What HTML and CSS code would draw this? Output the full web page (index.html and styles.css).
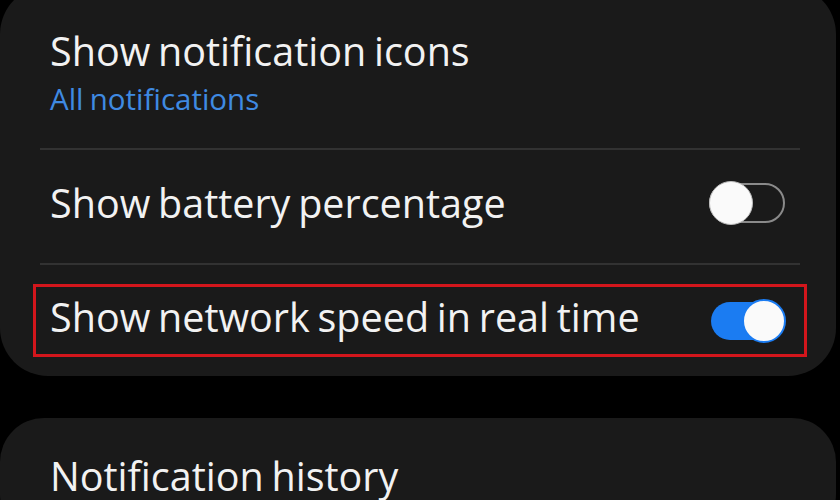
FILE: index.html
```html
<!DOCTYPE html>
<html>
<head>
<meta charset="utf-8">
<link rel="stylesheet" href="styles.css">
</head>
<body>
<div class="screen">
  <section class="card card-top">
    <div class="row row-stack">
      <div class="title">Show notification icons</div>
      <div class="sub">All notifications</div>
    </div>
    <div class="divider"></div>
    <div class="row row-toggle">
      <div class="title">Show battery percentage</div>
      <div class="switch off"><span class="thumb"></span></div>
    </div>
    <div class="divider"></div>
    <div class="row row-last">
      <div class="highlight">
        <div class="title title-up">Show network speed in real time</div>
        <div class="switch on"><span class="thumb"></span></div>
      </div>
    </div>
  </section>
  <section class="card card-bottom">
    <div class="row">
      <div class="title">Notification history</div>
    </div>
  </section>
</div>
</body>
</html>
```
FILE: styles.css
```css
html, body {
  margin: 0;
  padding: 0;
  background: #000;
}
body {
  width: 840px;
  height: 500px;
  overflow: hidden;
  font-family: "Open Sans", "Noto Sans", sans-serif;
}
.screen {
  display: flex;
  flex-direction: column;
}
.card {
  width: 836px;
  box-sizing: border-box;
  background: #1a1a1a;
  padding: 0 36px 0 40px;
  flex-shrink: 0;
}
.card-top {
  margin-top: -14px;
  border-radius: 48px;
}
.card-bottom {
  margin-top: 42px;
  border-radius: 44px;
  height: 120px;
}
.title {
  color: #f2f2f2;
  font-size: 39.5px;
  line-height: 44px;
  word-spacing: -2.5px;
  padding-left: 10px;
  white-space: nowrap;
}
.sub {
  color: #3f8ae2;
  font-size: 29.5px;
  line-height: 36px;
  word-spacing: -1.5px;
  margin-top: 8px;
  padding-left: 10px;
}
.row-stack {
  padding: 43px 0 31px;
}
.divider {
  height: 2px;
  background: #323232;
}
.row-toggle {
  box-sizing: border-box;
  height: 113px;
  padding-bottom: 7px;
  display: flex;
  align-items: center;
  justify-content: space-between;
}
.row-last {
  height: 111px;
  display: flex;
  align-items: center;
}
.highlight {
  flex: 1;
  height: 67px;
  margin: 0 -4px;
  padding: 0 4px;
  outline: 3px solid #d3161c;
  display: flex;
  align-items: center;
  justify-content: space-between;
}
.title-up {
  padding-bottom: 7px;
}
.switch {
  position: relative;
  box-sizing: border-box;
  margin-right: 15px;
  flex-shrink: 0;
}
.switch.off {
  width: 76px;
  height: 40px;
  border: 2px solid #8a8a8a;
  border-radius: 20px;
}
.switch.on {
  width: 74px;
  height: 38px;
  background: #1b7cf2;
  border-radius: 19px;
}
.thumb {
  position: absolute;
  box-sizing: border-box;
  border-radius: 50%;
  background: #fafafa;
}
.off .thumb {
  width: 44px;
  height: 44px;
  left: -2px;
  top: -4px;
  border: 1px solid #bdbdbd;
}
.on .thumb {
  width: 44px;
  height: 44px;
  right: -1px;
  top: -3px;
  border: 2px solid #1b7cf2;
}
.card-bottom .row {
  padding-top: 36px;
}
```
